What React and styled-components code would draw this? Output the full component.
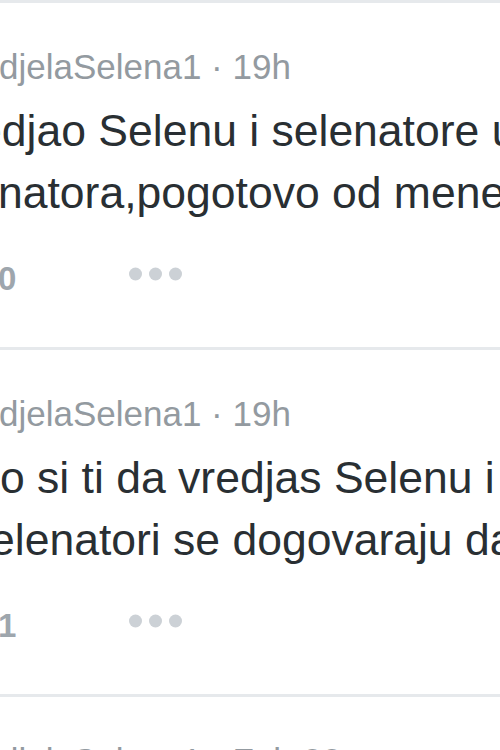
import React from "react";
import styled, { createGlobalStyle } from "styled-components";

const GlobalStyle = createGlobalStyle`
  html, body {
    margin: 0;
    padding: 0;
    background: #ffffff;
  }
  body {
    font-family: "Liberation Sans", Arial, sans-serif;
  }
`;

const Page = styled.div`
  width: 500px;
  height: 750px;
  overflow: hidden;
  background: #ffffff;
`;

const Tweet = styled.article`
  border-top: 3px solid #e6e9ec;
  padding: 44px 0 48px;
  box-sizing: border-box;
  height: 347px;
`;

const Header = styled.div`
  font-size: 35px;
  line-height: 40px;
  color: #939aa0;
  white-space: nowrap;
  margin-left: ${({ shift }) => shift || 0}px;
`;

const Body = styled.div`
  margin-top: 13px;
  font-size: 44.5px;
  line-height: 62px;
  color: #292f33;
`;

const Line = styled.div`
  white-space: nowrap;
  margin-left: ${({ shift }) => shift || 0}px;
`;

const Actions = styled.div`
  margin-top: 35px;
  height: 40px;
  display: flex;
  align-items: center;
`;

const Count = styled.span`
  width: 131px;
  margin-left: -2px;
  font-size: 33px;
  line-height: 40px;
  font-weight: bold;
  color: #9ea6ad;
`;

const More = styled.svg`
  display: block;
  margin-bottom: 10px;
`;

function MoreDots() {
  return (
    <More width="54" height="14" viewBox="0 0 54 14">
      <circle cx="6.5" cy="7" r="6.5" fill="#ccd1d6" />
      <circle cx="26.5" cy="7" r="6.5" fill="#ccd1d6" />
      <circle cx="46.5" cy="7" r="6.5" fill="#ccd1d6" />
    </More>
  );
}

const tweets = [
  {
    time: "19h",
    lines: [
      { text: "vredjao Selenu i selenatore u", shift: -60 },
      { text: "natora,pogotovo od mene", shift: -2 },
    ],
    count: "0",
  },
  {
    time: "19h",
    lines: [
      { text: "o si ti da vredjas Selenu i", shift: 0 },
      { text: "elenatori se dogovaraju da", shift: -10 },
    ],
    count: "1",
  },
  {
    time: "Feb 22",
    lines: [],
    count: "",
  },
];

export default function App() {
  return (
    <Page>
      <GlobalStyle />
      {tweets.map((t, i) => (
        <Tweet key={i}>
          <Header shift={-1}>djelaSelena1 · {t.time}</Header>
          <Body>
            {t.lines.map((l, j) => (
              <Line key={j} shift={l.shift}>
                {l.text}
              </Line>
            ))}
          </Body>
          {t.count && (
            <Actions>
              <Count>{t.count}</Count>
              <MoreDots />
            </Actions>
          )}
        </Tweet>
      ))}
    </Page>
  );
}
